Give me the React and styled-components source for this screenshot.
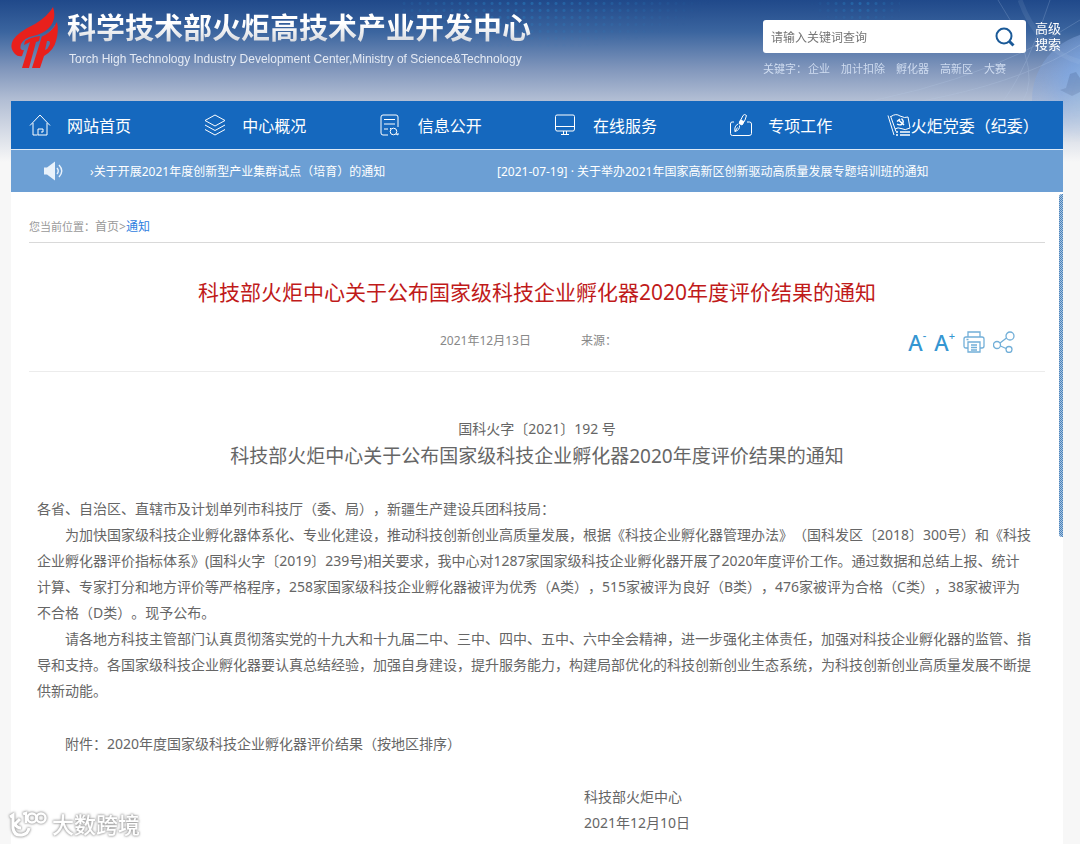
import React, { useState } from "react";
import styled, { createGlobalStyle } from "styled-components";

const navItems = [
    { id: "home", name: "网站首页" },
    { id: "layers", name: "中心概况" },
    { id: "doc", name: "信息公开" },
    { id: "screen", name: "在线服务" },
    { id: "work", name: "专项工作" },
    { id: "flag", name: "火炬党委（纪委）" },
];

const keywords = ["企业", "加计扣除", "孵化器", "高新区", "大赛"];

const paragraphs = [
    [
        "为加快国家级科技企业孵化器体系化、专业化建设，推动科技创新创业高质量发展，根据《科技企业孵化器管理办法》（国科发区〔2018〕300号）和《科技",
        "企业孵化器评价指标体系》(国科火字〔2019〕239号)相关要求，我中心对1287家国家级科技企业孵化器开展了2020年度评价工作。通过数据和总结上报、统计",
        "计算、专家打分和地方评价等严格程序，258家国家级科技企业孵化器被评为优秀（A类），515家被评为良好（B类），476家被评为合格（C类），38家被评为",
        "不合格（D类）。现予公布。",
    ],
    [
        "请各地方科技主管部门认真贯彻落实党的十九大和十九届二中、三中、四中、五中、六中全会精神，进一步强化主体责任，加强对科技企业孵化器的监管、指",
        "导和支持。各国家级科技企业孵化器要认真总结经验，加强自身建设，提升服务能力，构建局部优化的科技创新创业生态系统，为科技创新创业高质量发展不断提",
        "供新动能。",
    ],
];

const NavIcon = ({ id }) => {
    return <LineIcon viewBox="0 0 22 22" width="22" height="22" aria-hidden="true">
        {id === "home" && <path d="M1 11.5 L11 1 L21 11.5 M4 9 V21 H8.5 M18 9 V21 H9 V15 H14 V18 H12" />}
        {id === "layers" && <path d="M11 1 L21 6.5 L11 12 L1 6.5 Z M1 11 L11 16.5 L21 11 M1 15.5 L11 21 L21 15.5" />}
        {id === "doc" && <>
            <path d="M8 21 H3 Q1 21 1 19 V3 Q1 1 3 1 H16 Q18 1 18 3 V13 M4 5.5 H15 M4 10 H15 M4 15 H8" />
            <circle cx="13.5" cy="17.5" r="3.3" />
            <path d="M11 15 L10 14 M16 20 L18 21 V19" />
        </>}
        {id === "screen" && <path d="M2 1 H18 Q19.5 1 19.5 2.5 V15 Q19.5 17 18 17 H2 Q.5 17 .5 15 V2.5 Q.5 1 2 1 Z M.5 12.5 H19.5 M8.5 17 V20.5 M11.5 17 V20.5 M6 20.5 H14" />}
        {id === "work" && <>
            <path d="M4 8 H2 Q.5 8 .5 10 V19.5 Q.5 21.5 2.5 21.5 H19 Q21.5 21.5 21.5 19.5 V10 Q21.5 8 19.5 8 H17" />
            <path d="M10.5 6.5 L13 1.5 Q14.5 -.5 16.5 1.5 L15 6 L12.5 10 L9.5 8.5 Z" />
            <path fill="currentColor" d="M10.5 6 L14 7.5 L12 11 L9 9.5 Z" />
            <path d="M8 10 Q4 12 5 17.5 Q10 16 9.5 11.5 M5 17.5 L7.5 13.5" />
        </>}
        {id === "flag" && <>
            <path d="M0 1.5 L6 21 M2.5 2 L8 17.5 M3 2.5 Q8 -1 12 2 Q17 4.5 20 3 L22 14 Q17 17 13 14.5 Q10 13 7 15" />
            <path strokeWidth="1.6" d="M9 7.5 L12 5 M10.5 6 L16 11" />
            <path strokeWidth="1.4" d="M13.5 4.5 Q17 8 13.5 10.5 Q11.5 11.5 9 10" />
            <path strokeWidth="1.5" d="M8 18 H10 M12 18 H22 M8 21 H10 M12 21 H22" />
        </>}
    </LineIcon>
}

const Logo = () => {
    return <svg viewBox="0 0 48 62" width="48" height="62" aria-hidden="true">
        <g fill="#e8201c">
            <path d="M42 0 Q37 9 24 17 Q7 25 2 33 Q-2 41 4 47 Q7 50 11 49 L13 43 Q8 44 10 37 Q13 31 22 29 Q32 27 38 21 Q46 12 42 0 Z" />
            <path d="M14 34 Q20 30 29 29 L28 34 L25 35 L18 61 H11 L19 35 L13 38 Z" />
            <path d="M46 15 Q41 24 31 29 L21 61 H29 L33 49 Q43 43 45 34 Q48 24 46 15 Z" />
        </g>
        <path fill="#5876a6" d="M36 34 H38 Q40 35 38 39 Q37 42 34 43 Z" />
        <path fill="none" stroke="#48699f" d="M31 29 Q40 25 44 18" />
    </svg>
}

// light arcs and the globe at the right of the banner
const BannerArt = () => {
    return <Art viewBox="0 0 360 150" aria-hidden="true">
        <defs>
            <radialGradient id="globe" cx="60%" cy="50%" r="55%">
                <stop offset="0" stopColor="#9fd0ef" stopOpacity=".8" />
                <stop offset=".7" stopColor="#7fa9e6" stopOpacity=".75" />
                <stop offset="1" stopColor="#82a5dd" stopOpacity=".45" />
            </radialGradient>
            <linearGradient id="fade" x1="0" x2="0" y1="0" y2="1">
                <stop offset=".5" stopColor="#fff" />
                <stop offset=".95" stopColor="#000" />
            </linearGradient>
            <mask id="low"><rect width="360" height="150" fill="url(#fade)" /></mask>
        </defs>
        <g mask="url(#low)">
            <circle cx="380" cy="100" r="68" fill="url(#globe)" />
            <path fill="#6787b9" opacity=".6" d="M346 88 L350 74 L356 72 L360 78 V92 L352 96 L340 90 Z" />
            <g fill="none" stroke="#c5d9f3" opacity=".2">
                <path d="M80 112 Q250 92 360 20 M20 120 Q260 110 360 45 M278 0 Q330 80 295 110 M330 0 Q300 90 270 115" />
                <path strokeWidth="5" opacity=".5" d="M300 0 Q318 50 360 62" />
            </g>
        </g>
    </Art>
}

const App = () => {
    const [query, setQuery] = useState("");
    const [zoomed, setZoomed] = useState(0);

    return <>
        <GlobalStyle />
        <Banner>
            <BannerArt />
            <Dots />
            <Brand href="#">
                <Logo />
                <div>
                    <BrandName>科学技术部火炬高技术产业开发中心</BrandName>
                    <BrandSub>Torch High Technology Industry Development Center,Ministry of Science&amp;Technology</BrandSub>
                </div>
            </Brand>
            <SearchArea>
                <SearchRow>
                    <SearchBox onSubmit={(e) => e.preventDefault()}>
                        <SearchInput aria-label="关键词" placeholder="请输入关键词查询" value={query} onChange={(e) => setQuery(e.target.value)} />
                        <SearchButton aria-label="搜索">
                            <svg viewBox="0 0 20 20" width="20" height="20" fill="none" stroke="#1b5a98" strokeWidth="2">
                                <circle cx="9" cy="9" r="7.5" />
                                <path strokeWidth="3" d="M14.5 14.5 L18.5 18.5" />
                            </svg>
                        </SearchButton>
                    </SearchBox>
                    <Advanced href="#">高级<br />搜索</Advanced>
                </SearchRow>
                <Keywords>
                    <span>关键字：</span>
                    {keywords.map((word) => <a href="#" key={word}>{word}</a>)}
                </Keywords>
            </SearchArea>
        </Banner>

        <Page>
            <Nav>
                {navItems.map((item) => <NavLink href="#" key={item.id} $tight={item.id === "flag"}>
                    <NavIcon id={item.id} />
                    {item.name}
                </NavLink>)}
            </Nav>
            <Ticker>
                <svg viewBox="0 0 20 20" width="20" height="20" aria-hidden="true">
                    <path fill="#e9f2fb" d="M0 6.5 H3 L11 0.5 V19.5 L3 13.5 H0 Z" />
                    <path fill="none" stroke="#e9f2fb" strokeWidth="1.4" d="M13 7 Q15.5 10 13 13 M15 4 Q20.5 10 15 16" />
                </svg>
                <News>
                    <a href="#">›关于开展2021年度创新型产业集群试点（培育）的通知</a>
                    <a href="#">[2021-07-19] · 关于举办2021年国家高新区创新驱动高质量发展专题培训班的通知</a>
                </News>
            </Ticker>

            <Main>
                <Article>
                    <Crumbs>
                        <CrumbLabel>您当前位置：</CrumbLabel>
                        <a href="#">首页</a>&gt;<Current href="#">通知</Current>
                    </Crumbs>
                    <Title>科技部火炬中心关于公布国家级科技企业孵化器2020年度评价结果的通知</Title>
                    <Meta>
                        <Facts>
                            <span>2021年12月13日</span>
                            <span>来源：</span>
                        </Facts>
                        <Tools>
                            <Tool aria-label="缩小字体" onClick={() => setZoomed(zoomed - 1)}>A<sup>-</sup></Tool>
                            <Tool aria-label="放大字体" onClick={() => setZoomed(zoomed + 1)}>A<sup>+</sup></Tool>
                            <Tool aria-label="打印" onClick={() => window.print()}>
                                <ToolIcon viewBox="0 0 22 22" width="22" height="22">
                                    <path d="M5 6 V1 H17 V6 M5 17 H3 Q1 17 1 15 V8 Q1 6 3 6 H19 Q21 6 21 8 V15 Q21 17 19 17 H17 M5 11 H17 V21 H5 Z M8 14 H14 M8 16.5 H14 M8 19 H14 M3.5 8.5 H5.5" />
                                </ToolIcon>
                            </Tool>
                            <Tool aria-label="分享">
                                <ToolIcon viewBox="0 0 22 22" width="22" height="22">
                                    <circle cx="17" cy="5" r="4" />
                                    <circle cx="4" cy="14" r="3.5" />
                                    <circle cx="16" cy="18.5" r="3" />
                                    <path d="M7 12 L13.5 7 M7.5 15 L13 17.5" />
                                </ToolIcon>
                            </Tool>
                        </Tools>
                    </Meta>
                    <Content $size={14 + zoomed}>
                        <DocNumber>国科火字〔2021〕192 号</DocNumber>
                        <DocTitle>科技部火炬中心关于公布国家级科技企业孵化器2020年度评价结果的通知</DocTitle>
                        <Para>各省、自治区、直辖市及计划单列市科技厅（委、局），新疆生产建设兵团科技局：</Para>
                        {paragraphs.map((lines, index) => <Para $indent key={index}>
                            {lines.map((line) => <React.Fragment key={line}>{line}<br /></React.Fragment>)}
                        </Para>)}
                        <Attachment>附件：<a href="#">2020年度国家级科技企业孵化器评价结果（按地区排序）</a></Attachment>
                        <Signature>
                            科技部火炬中心<br />
                            2021年12月10日
                        </Signature>
                    </Content>
                </Article>
                <ScrollStrip />
            </Main>
        </Page>

        <Watermark>
            <svg viewBox="0 0 40 28" width="40" height="28" fill="none" stroke="#fff" strokeWidth="3" aria-hidden="true">
                <path d="M2 7 L5 5 V18 Q6 26 14 25 Q20 24 21 18 M12 9 L7 14 Q9 18 13 18" />
                <path strokeWidth="2.5" d="M15 4 L18 3 V13" />
                <circle cx="24" cy="8" r="4.5" strokeWidth="2.5" />
                <circle cx="33" cy="8" r="4.5" strokeWidth="2.5" />
            </svg>
            大数跨境
        </Watermark>
    </>
}

const GlobalStyle = createGlobalStyle`
    * {
        box-sizing: border-box;
    }
    body {
        margin: 0;
        min-height: 100vh;
        overflow-x: hidden;
        background: #f7f7f7 linear-gradient(#20498a 0, #3b659f 32px, #7f95bb 68px, #b2bed4 100px, #f7f7f7 162px) no-repeat;
        font-family: "Noto Sans", "Noto Sans CJK SC", sans-serif;
        text-spacing-trim: space-all;
        color: #666;
    }
    a {
        color: inherit;
        text-decoration: none;
    }
    button {
        padding: 0;
        border: none;
        background: none;
        font-family: inherit;
        cursor: pointer;
    }
    svg {
        flex: none;
        display: block;
    }
`;

const Banner = styled.header`
    position: relative;
    display: flex;
    justify-content: space-between;
    align-items: flex-start;
    height: 101px;
    padding: 7px 19px 0 11px;
`;

const Art = styled.svg`
    position: absolute;
    top: 0;
    right: 0;
    width: 360px;
    height: 150px;
`;

const Dots = styled.div`
    position: absolute;
    top: 0;
    left: 400px;
    width: 500px;
    height: 54px;
    background: radial-gradient(circle, #2a86c8 1px, transparent 2px) 0 0 / 8px 7px;
    mask-image: radial-gradient(ellipse 180px 50px at 130px 0, #000, transparent), radial-gradient(ellipse 50px 20px at 460px 5px, #000, transparent);
    opacity: 0.5;
`;

const Brand = styled.a`
    position: relative;
    display: flex;
    gap: 8px;
    white-space: nowrap;
`;

const BrandName = styled.h1`
    margin: 0;
    font-size: 29px;
    line-height: 42px;
    font-weight: bold;
    background: linear-gradient(#fff 40%, #d5d8de 85%);
    background-clip: text;
    color: transparent;
`;

const BrandSub = styled.div`
    padding-left: 2px;
    font-family: "Liberation Sans", sans-serif;
    font-size: 12px;
    line-height: 20px;
    color: #e4eaf4;
`;

const SearchArea = styled.div`
    position: relative;
    padding-top: 13px;
`;

const SearchRow = styled.div`
    display: flex;
    gap: 9px;
`;

const SearchBox = styled.form`
    display: flex;
    align-items: center;
    width: 263px;
    height: 33px;
    padding: 0 11px 0 8px;
    border-radius: 3px;
    background: #fff;
`;

const SearchInput = styled.input`
    flex: 1;
    min-width: 0;
    padding: 2px 0 0;
    border: none;
    outline: none;
    font-family: inherit;
    font-size: 12px;
    &::placeholder {
        color: #757575;
    }
`;

const SearchButton = styled.button`
    display: flex;
`;

const Advanced = styled.a`
    font-size: 13px;
    line-height: 16px;
    color: #fff;
`;

const Keywords = styled.div`
    display: flex;
    gap: 11px;
    margin-top: 8px;
    font-size: 11px;
    line-height: 16px;
    color: #cfdcf0;
    span {
        margin-right: -10px;
    }
`;

const Page = styled.div`
    position: relative;
    margin: 0 17px 0 11px;
`;

const Nav = styled.nav`
    display: grid;
    grid-template-columns: repeat(6, 1fr);
    height: 49px;
    border-bottom: 1px solid #dce9f7;
    background: #1568be;
`;

const NavLink = styled.a`
    display: flex;
    align-items: center;
    gap: ${(p) => (p.$tight ? "1px" : "16px")};
    padding-left: ${(p) => (p.$tight ? "0" : "18px")};
    white-space: nowrap;
    font-size: 16px;
    color: #fff;
`;

const LineIcon = styled.svg`
    fill: none;
    stroke: currentColor;
    stroke-width: 1;
    overflow: visible;
`;

const Ticker = styled.div`
    display: flex;
    align-items: center;
    gap: 26px;
    height: 42px;
    padding-left: 33px;
    background: #6c9fd4;
`;

const News = styled.div`
    display: grid;
    grid-template-columns: 407px 1fr;
    flex: 1;
    white-space: nowrap;
    font-size: 12px;
    color: #fff;
`;

const Main = styled.main`
    display: flex;
    align-items: flex-start;
    min-height: calc(100vh - 192px);
    padding-left: 18px;
    background: #fff;
`;

const Article = styled.article`
    flex: 1;
    min-width: 0;
    margin-right: 14px;
`;

const ScrollStrip = styled.div`
    width: 4px;
    height: 343px;
    margin-top: 2px;
    border-radius: 3px 0 0 3px;
    background: repeating-conic-gradient(#4d84bb 0 25%, #a5c3e0 0 50%) 0 0 / 2px 2px;
`;

const Crumbs = styled.nav`
    height: 51px;
    padding-top: 26px;
    border-bottom: 1px solid #d9d9d9;
    font-size: 12px;
    line-height: 18px;
    color: #999;
`;

const CrumbLabel = styled.span`
    font-size: 11px;
`;

const Current = styled.a`
    color: #2f80e0;
`;

const Title = styled.h2`
    margin: 33px 0 0;
    text-align: center;
    font-size: 21px;
    line-height: 32px;
    font-weight: normal;
    color: #c01a1a;
`;

const Meta = styled.div`
    display: flex;
    justify-content: space-between;
    align-items: center;
    height: 64px;
    padding: 0 30px 0 411px;
    border-bottom: 1px solid #ececec;
    font-size: 12px;
    color: #888;
`;

const Facts = styled.div`
    display: flex;
    gap: 50px;
`;

const Tools = styled.div`
    display: flex;
    align-items: center;
    gap: 8px;
    padding-top: 4px;
`;

const Tool = styled.button`
    display: flex;
    font-size: 22px;
    line-height: 24px;
    font-weight: 500;
    color: #3596d2;
    sup {
        font-size: 11px;
        line-height: 12px;
    }
`;

const ToolIcon = styled.svg`
    fill: none;
    stroke: #72afd8;
    stroke-width: 1.3;
`;

const Content = styled.div`
    padding: 44px 8px 0;
    font-size: ${(p) => p.$size}px;
    line-height: 26px;
    white-space: nowrap;
`;

const DocNumber = styled.div`
    text-align: center;
`;

const DocTitle = styled.h3`
    margin: 0 0 26px;
    text-align: center;
    font-size: 19px;
    line-height: 28px;
    font-weight: normal;
`;

const Para = styled.p`
    margin: 0;
    text-indent: ${(p) => (p.$indent ? "2em" : "0")};
`;

const Attachment = styled.p`
    margin: 27px 0;
    text-indent: 2em;
`;

const Signature = styled.div`
    padding-left: 547px;
`;

const Watermark = styled.div`
    position: fixed;
    left: 8px;
    bottom: 4px;
    display: flex;
    align-items: center;
    gap: 4px;
    font-size: 22px;
    line-height: 32px;
    font-weight: 500;
    color: #fff;
    filter: drop-shadow(0 0 1px #999) drop-shadow(0 0 1px #bbb);
`;

export default App;
